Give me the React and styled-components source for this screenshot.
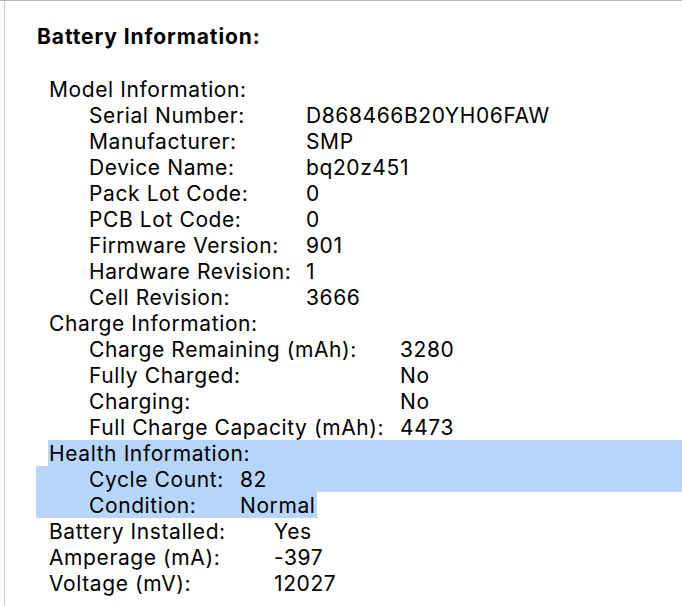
import React from "react";
import styled, { createGlobalStyle } from "styled-components";

const GlobalStyle = createGlobalStyle`
  html, body {
    margin: 0;
    background: #ffffff;
  }
`;

const model = [
  ["Serial Number:", "D868466B20YH06FAW"],
  ["Manufacturer:", "SMP"],
  ["Device Name:", "bq20z451"],
  ["Pack Lot Code:", "0"],
  ["PCB Lot Code:", "0"],
  ["Firmware Version:", "901"],
  ["Hardware Revision:", "1"],
  ["Cell Revision:", "3666"],
];

const charge = [
  ["Charge Remaining (mAh):", "3280"],
  ["Fully Charged:", "No"],
  ["Charging:", "No"],
  ["Full Charge Capacity (mAh):", "4473"],
];

const health = [
  ["Cycle Count:", "82"],
  ["Condition:", "Normal"],
];

const general = [
  ["Battery Installed:", "Yes"],
  ["Amperage (mA):", "-397"],
  ["Voltage (mV):", "12027"],
];

function Section({ title, labelWidth, rows, selected }) {
  return (
    <div>
      <Heading $selected={selected}>{title}</Heading>
      {rows.map(([label, value], i) => (
        <Field
          key={label}
          $indent={40}
          $selected={selected}
          $fit={selected && i === rows.length - 1}
        >
          <Label $width={labelWidth}>{label}</Label>
          <span>{value}</span>
        </Field>
      ))}
    </div>
  );
}

export default function App() {
  return (
    <>
      <GlobalStyle />
      <Frame>
        <Panel>
          <Title>Battery Information:</Title>
          <Body>
            <Section title="Model Information:" labelWidth={217} rows={model} />
            <Section title="Charge Information:" labelWidth={311} rows={charge} />
            <Section title="Health Information:" labelWidth={151} rows={health} selected />
            {general.map(([label, value]) => (
              <Field key={label} $indent={0}>
                <Label $width={225}>{label}</Label>
                <span>{value}</span>
              </Field>
            ))}
          </Body>
        </Panel>
      </Frame>
    </>
  );
}

const Frame = styled.div`
  height: 606px;
  box-sizing: border-box;
  border-top: 1px solid #b9b9b9;
  padding-left: 4px;
  overflow: hidden;
`;

const Panel = styled.div`
  height: 100%;
  box-sizing: border-box;
  border-left: 1px solid #d2d2d2;
  padding: 23px 0 0 32px;
  font-family: Inter, "DejaVu Sans", sans-serif;
  font-size: 21px;
  letter-spacing: 0.6px;
  color: #000;
`;

const Title = styled.h2`
  margin: 0;
  font-size: 21px;
  font-weight: 700;
  line-height: 26px;
  letter-spacing: 0.9px;
`;

const Body = styled.div`
  margin-top: 26px;
  padding-left: 12px;
`;

const Row = styled.div`
  height: 26px;
  box-sizing: border-box;
  padding-top: 2px;
  line-height: 24px;
  white-space: nowrap;
`;

const Heading = styled(Row)`
  ${(p) =>
    p.$selected &&
    `
    margin-left: -1px;
    padding-left: 1px;
    background: #b7d6fb;
  `}
`;

const Field = styled(Row)`
  display: flex;
  padding-left: ${(p) => p.$indent}px;
  ${(p) =>
    p.$selected &&
    `
    margin-left: -13px;
    padding-left: ${p.$indent + 13}px;
    background: #b7d6fb;
  `}
  ${(p) => p.$fit && `width: fit-content; padding-right: 1px;`}
`;

const Label = styled.span`
  flex: 0 0 ${(p) => p.$width}px;
`;
